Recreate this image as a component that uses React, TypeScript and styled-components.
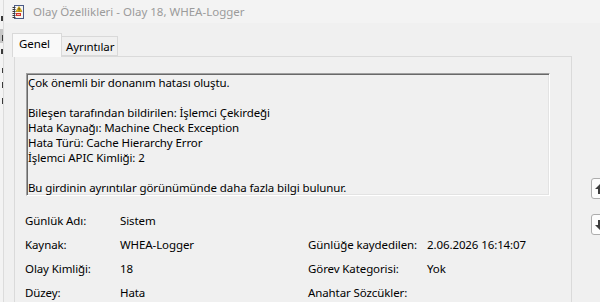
import React from "react";
import styled, { createGlobalStyle } from "styled-components";

const Global = createGlobalStyle`
  html, body { margin: 0; padding: 0; background: #f0f0f0; overflow: hidden; }
  body { font-family: "Noto Sans", "Segoe UI", sans-serif; font-size: 11.5px; letter-spacing: -0.1px; color: #000; }
  #root { width: 600px; height: 302px; }
`;

const Screen = styled.div`
  width: 600px;
  height: 302px;
  display: flex;
  overflow: hidden;
  background: #f0f0f0;
`;

const BehindStrip = styled.div`
  width: 3px;
  flex: none;
  overflow: hidden;
  background: #f3f3f3;
  border-right: 1px solid #dcdcdc;
  display: flex;
  flex-direction: column;
  align-items: flex-end;
  padding-top: 16px;
`;

const Mark = styled.div<{ $h: number; $gap: number; $shade?: boolean; $w?: number }>`
  width: ${(p) => p.$w ?? 1}px;
  height: ${(p) => p.$h}px;
  margin-top: ${(p) => p.$gap}px;
  background: ${(p) => (p.$shade ? "#c6c6c6" : "#3a3a3a")};
`;

const Window = styled.div`
  flex: 1;
  min-width: 0;
  display: flex;
  flex-direction: column;
`;

const TitleBar = styled.div`
  height: 23px;
  flex: none;
  background: #f3f3f3;
  display: flex;
  align-items: center;
  padding-left: 8px;
  gap: 9px;
  color: #9b9b9b;
  font-size: 11.5px;
  letter-spacing: 0;
`;

const Content = styled.div`
  flex: 1;
  display: flex;
  padding: 10px 0 0 8px;
`;

const TabArea = styled.div`
  width: 560px;
  flex: none;
  display: flex;
  flex-direction: column;
`;

const TabStrip = styled.div`
  height: 23px;
  display: flex;
  align-items: flex-end;
  position: relative;
  z-index: 1;
`;

const Tab = styled.div<{ $active?: boolean }>`
  box-sizing: border-box;
  height: ${(p) => (p.$active ? "24px" : "20px")};
  margin-bottom: ${(p) => (p.$active ? "-1px" : "0")};
  padding: ${(p) => (p.$active ? "2px 0 0 6px" : "0 0 0 4px")};
  width: ${(p) => (p.$active ? "50px" : "56px")};
  border: 1px solid #d9d9d9;
  border-bottom: ${(p) => (p.$active ? "none" : "1px solid #d9d9d9")};
  border-left: ${(p) => (p.$active ? "1px solid #d9d9d9" : "none")};
  background: ${(p) => (p.$active ? "#f9f9f9" : "#f0f0f0")};
  display: flex;
  align-items: ${(p) => (p.$active ? "flex-start" : "center")};
  white-space: nowrap;
`;

const Panel = styled.div`
  flex: 1;
  margin-left: 2px;
  width: 558px;
  box-sizing: border-box;
  border: 1px solid #dadada;
  border-bottom: none;
  padding: 16px 0 0 11px;
  display: flex;
  flex-direction: column;
`;

const MessageBox = styled.div`
  box-sizing: border-box;
  width: 524px;
  height: 123px;
  border-style: solid;
  border-width: 1px;
  border-color: #a0a0a0 #ffffff #ffffff #a0a0a0;
  box-shadow: inset 1px 1px 0 #696969, inset -1px -1px 0 #e3e3e3;
  padding: 1px 0 0 1px;
  line-height: 15px;
  white-space: pre;
`;

const Fields = styled.div`
  margin: 12px 0 0 -1px;
  display: grid;
  grid-template-columns: 95px 188px 119px auto;
  grid-auto-rows: 24px;
  align-items: center;
`;

const Label = styled.div`
  white-space: nowrap;
`;

const Value = styled.div`
  white-space: nowrap;
`;

const SideButtons = styled.div`
  margin: 145px 0 0 19px;
  display: flex;
  flex-direction: column;
  gap: 15px;
`;

const NavButton = styled.div`
  box-sizing: border-box;
  width: 24px;
  height: 21px;
  border: 1px solid #adadad;
  border-radius: 3px;
  background: #fdfdfd;
  display: flex;
  align-items: center;
  padding-left: 2px;
`;

const EventIcon = () => (
  <svg width="12" height="14" viewBox="0 0 12 14">
    <rect x="2.5" y="0.5" width="9" height="13" fill="#eef2fa" stroke="#4b5b86" />
    <rect x="3.5" y="1.5" width="7" height="11" fill="#fbf7ea" />
    {[2, 4, 6, 8, 10, 12].map((y) => (
      <rect key={y} x="0.5" y={y} width="3" height="1" fill="#3a3a3a" />
    ))}
    <polygon points="7,1.5 10,6.5 4,6.5" fill="#f3c200" stroke="#9b7400" strokeWidth="0.6" />
    <rect x="6.6" y="3" width="0.9" height="2" fill="#222" />
    <rect x="6.6" y="5.5" width="0.9" height="0.8" fill="#222" />
    <rect x="4" y="8" width="5" height="3" fill="#d6322e" />
    <rect x="5" y="9" width="3" height="1" fill="#f3b7b5" />
  </svg>
);

const Arrow = ({ down }: { down?: boolean }) => (
  <svg width="12" height="12" viewBox="0 0 12 12" style={down ? { transform: "rotate(180deg)" } : undefined}>
    <path d="M6 1 L11 6 L8 6 L8 11 L4 11 L4 6 L1 6 Z" fill="#3d3d3d" />
  </svg>
);

export default function App() {
  return (
    <>
      <Global />
      <Screen>
        <BehindStrip>
          <Mark $h={5} $gap={0} $w={2} />
          <Mark $h={14} $gap={8} $w={3} $shade />
          <Mark $h={6} $gap={-8} />
          <Mark $h={5} $gap={8} $w={2} />
          <Mark $h={5} $gap={14} />
          <Mark $h={6} $gap={9} />
          <Mark $h={6} $gap={10} />
        </BehindStrip>
        <Window>
          <TitleBar>
            <EventIcon />
            <span>Olay Özellikleri - Olay 18, WHEA-Logger</span>
          </TitleBar>
          <Content>
            <TabArea>
              <TabStrip>
                <Tab $active>Genel</Tab>
                <Tab>Ayrıntılar</Tab>
              </TabStrip>
              <Panel>
                <MessageBox>
                  {"Çok önemli bir donanım hatası oluştu.\n\nBileşen tarafından bildirilen: İşlemci Çekirdeği\nHata Kaynağı: Machine Check Exception\nHata Türü: Cache Hierarchy Error\nİşlemci APIC Kimliği: 2\n\nBu girdinin ayrıntılar görünümünde daha fazla bilgi bulunur."}
                </MessageBox>
                <Fields>
                  <Label>Günlük Adı:</Label>
                  <Value>Sistem</Value>
                  <Label />
                  <Value />
                  <Label>Kaynak:</Label>
                  <Value>WHEA-Logger</Value>
                  <Label>Günlüğe kaydedilen:</Label>
                  <Value>2.06.2026 16:14:07</Value>
                  <Label>Olay Kimliği:</Label>
                  <Value>18</Value>
                  <Label>Görev Kategorisi:</Label>
                  <Value>Yok</Value>
                  <Label>Düzey:</Label>
                  <Value>Hata</Value>
                  <Label>Anahtar Sözcükler:</Label>
                  <Value />
                </Fields>
              </Panel>
            </TabArea>
            <SideButtons>
              <NavButton>
                <Arrow />
              </NavButton>
              <NavButton>
                <Arrow down />
              </NavButton>
            </SideButtons>
          </Content>
        </Window>
      </Screen>
    </>
  );
}
